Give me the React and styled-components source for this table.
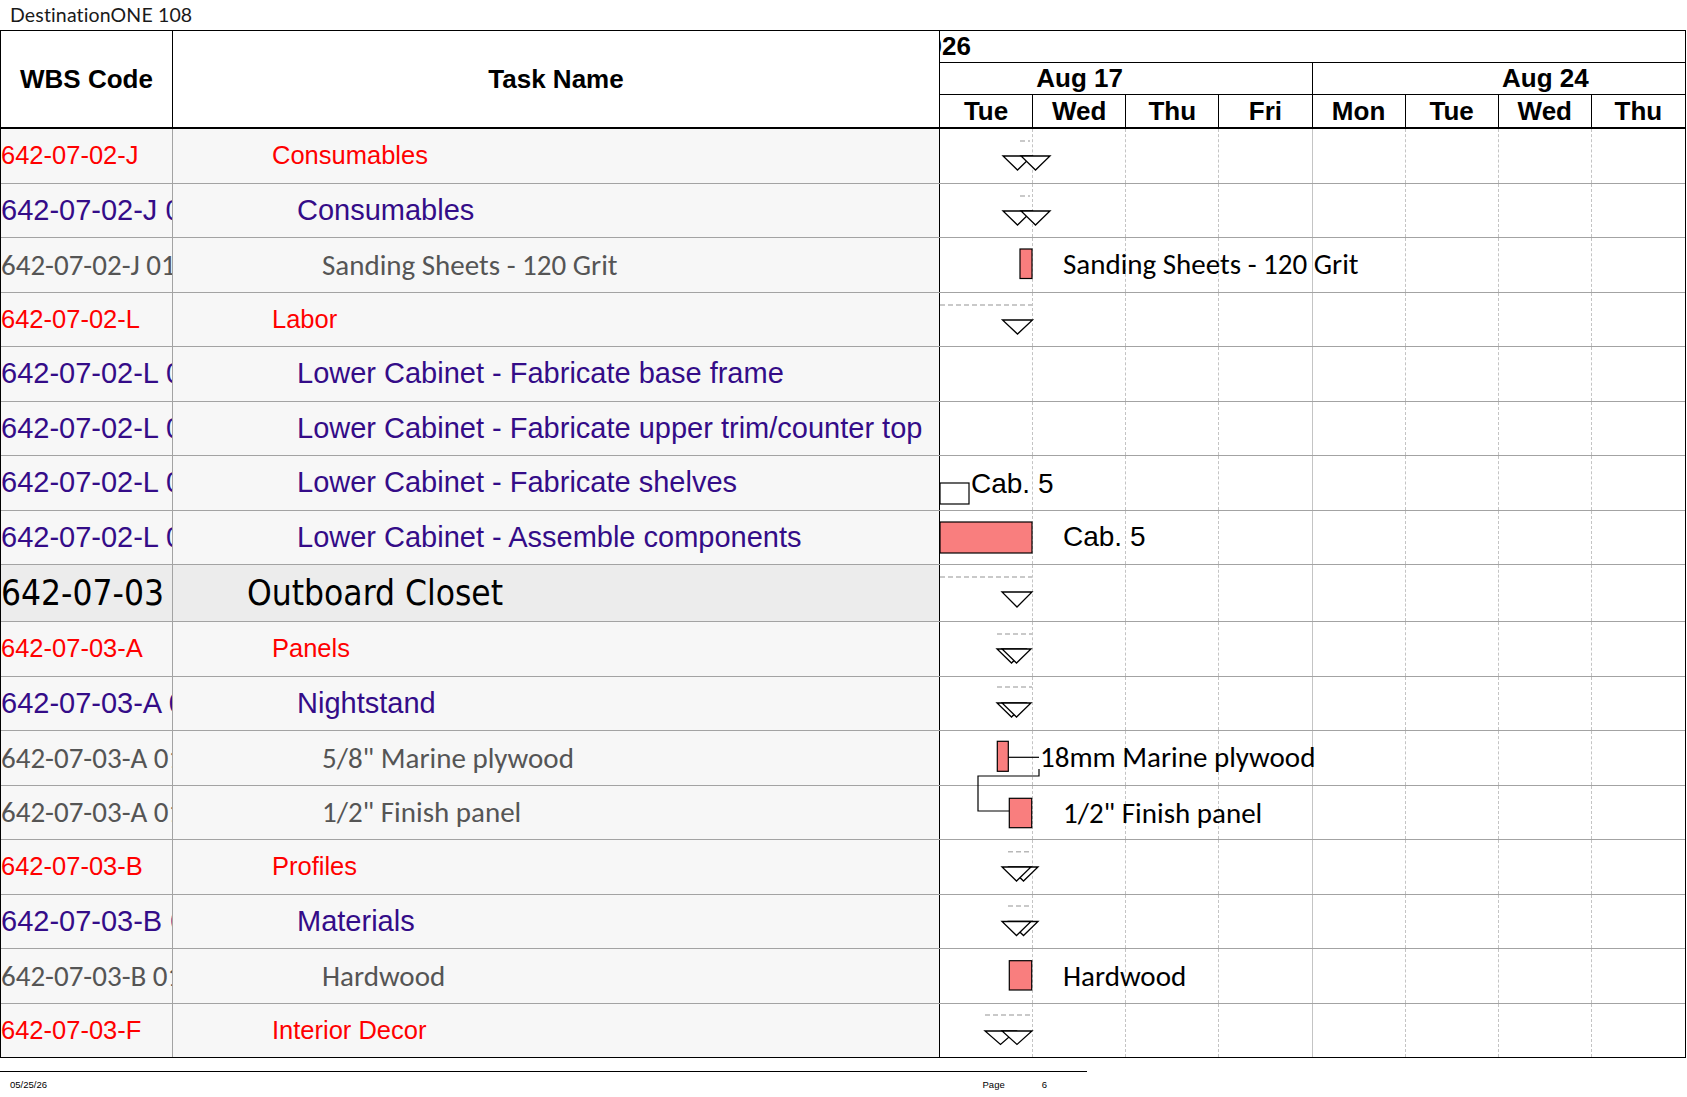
import React from 'react';
import styled, { createGlobalStyle } from 'styled-components';

const DAY_W = 745 / 8;
const ROW_H = 54.5;
const L1_H = 57;

const ARIAL = '"Liberation Sans", Arial, sans-serif';
const CALIBRI = 'Carlito, Lato, "Liberation Sans", sans-serif';
const TAHOMA = '"DejaVu Sans Condensed", "DejaVu Sans", sans-serif';

const Global = createGlobalStyle`
  html, body { margin: 0; padding: 0; background: #fff; }
  body { font-family: ${ARIAL}; }
  * { box-sizing: border-box; }
`;

const Page = styled.div`
  width: 1687px;
  height: 1097px;
  overflow: hidden;
  background: #fff;
`;

const Title = styled.div`
  height: 30px;
  line-height: 30px;
  padding-left: 10px;
  font-family: Lato, "Open Sans", sans-serif;
  font-size: 19.5px;
  letter-spacing: 0.15px;
  color: #1a1a1a;
`;

const Table = styled.div`
  width: 1686px;
  border: 1px solid #000;
  display: flex;
  flex-direction: column;
`;

const Grid = styled.div`
  display: grid;
  grid-template-columns: 172px 767px 745px;
`;

const HeaderRow = styled(Grid)`
  height: 98px;
  border-bottom: 2px solid #000;
`;

const HeadCell = styled.div`
  display: flex;
  align-items: center;
  justify-content: center;
  border-right: 1px solid #000;
  font-family: ${ARIAL};
  font-weight: 700;
  font-size: 26px;
  color: #000;
`;

const TimeHead = styled.div`
  display: flex;
  flex-direction: column;
`;

const Tier = styled.div`
  height: 32px;
  display: flex;
  overflow: hidden;
  border-bottom: ${(p) => (p.$last ? 'none' : '1px solid #000')};
  font-family: ${ARIAL};
  font-weight: 700;
  font-size: 26px;
  color: #000;
`;

const YearText = styled.div`
  line-height: 31px;
  white-space: nowrap;
  text-indent: -27px;
`;

const WeekCell = styled.div`
  width: ${DAY_W * 4}px;
  flex-shrink: 0;
  display: flex;
  overflow: hidden;
  border-right: ${(p) => (p.$last ? 'none' : '1px solid #000')};
`;

const WeekLabel = styled.div`
  width: ${DAY_W * 5}px;
  flex-shrink: 0;
  margin-left: ${(p) => p.$shift}px;
  text-align: center;
  line-height: 31px;
`;

const DayHead = styled.div`
  width: ${DAY_W}px;
  flex-shrink: 0;
  text-align: center;
  line-height: 32px;
  border-right: ${(p) => (p.$last ? 'none' : '1px solid #000')};
`;

const BodyRow = styled(Grid)`
  height: ${(p) => (p.$level === 1 ? L1_H : ROW_H)}px;
  border-bottom: 1px solid #a3a3a3;
  &:last-child { border-bottom: none; height: ${ROW_H - 1}px; }
`;

const levelFont = {
  1: { family: TAHOMA, size: 35, color: '#000' },
  2: { family: ARIAL, size: 25.5, color: '#ff0000' },
  3: { family: ARIAL, size: 29, color: '#340c88' },
  4: { family: CALIBRI, size: 29, color: '#555555' },
};

const TextCell = styled.div`
  display: flex;
  align-items: center;
  overflow: hidden;
  white-space: nowrap;
  background: ${(p) => (p.$level === 1 ? '#ececec' : '#f7f7f7')};
  font-family: ${(p) => levelFont[p.$level].family};
  font-size: ${(p) => levelFont[p.$level].size}px;
  color: ${(p) => levelFont[p.$level].color};
`;

const WbsCell = styled(TextCell)`
  border-right: 1px solid #a3a3a3;
  padding-left: 0;
`;

const TaskCell = styled(TextCell)`
  border-right: 1px solid #000;
  padding-left: ${(p) => 74 + (p.$level - 1) * 25}px;
`;

const TimeCell = styled.div`
  position: relative;
  display: flex;
  background: #fff;
`;

const DayCol = styled.div`
  width: ${DAY_W}px;
  flex-shrink: 0;
  border-right: ${(p) =>
    p.$last ? 'none' : p.$week ? '1px solid #c4c4c4' : '1px dashed #c4c4c4'};
`;

const Overlay = styled.svg`
  position: absolute;
  left: 0;
  top: 0;
  z-index: 2;
  overflow: visible;
  pointer-events: none;
`;

const BarLabel = styled.span`
  position: absolute;
  z-index: 2;
  transform: translateY(-50%);
  white-space: nowrap;
  color: #000;
  font-family: ${(p) => (p.$font === 'arial' ? ARIAL : CALIBRI)};
  font-size: ${(p) => (p.$font === 'arial' ? 28 : 29)}px;
  line-height: 1;
`;

const Footer = styled.div`
  width: 1087px;
  margin-top: 13px;
  border-top: 1px solid #000;
  display: flex;
  align-items: center;
  height: 26px;
  padding-left: 10px;
  padding-right: 40px;
  font-family: ${ARIAL};
  font-size: 9.5px;
  color: #000;
`;

const FootDate = styled.span`
  flex: 1;
`;

const FootPage = styled.span`
  margin-right: 37px;
`;

const tri = (x, y, w, h) => ({ t: 'tri', x, y, w, h });
const dash = (x1, x2, y) => ({ t: 'dash', x1, x2, y });
const bar = (x, y, w, h) => ({ t: 'bar', x, y, w, h });
const label = (x, y, text, font = 'calibri') => ({ t: 'label', x, y, text, font });

const rows = [
  { wbs: '642-07-02-J', name: 'Consumables', level: 2,
    g: [dash(80, 90, 12), tri(63, 27, 29, 14), tri(81, 27, 29, 14)] },
  { wbs: '642-07-02-J 01', name: 'Consumables', level: 3,
    g: [dash(80, 90, 12), tri(63, 27, 29, 14), tri(81, 27, 29, 14)] },
  { wbs: '642-07-02-J 01.01', name: 'Sanding Sheets - 120 Grit', level: 4,
    g: [bar(80, 11, 12, 29.5), label(123, 26, 'Sanding Sheets - 120 Grit')] },
  { wbs: '642-07-02-L', name: 'Labor', level: 2,
    g: [dash(0, 92, 12), tri(62.5, 27, 30, 14)] },
  { wbs: '642-07-02-L 01', name: 'Lower Cabinet - Fabricate base frame', level: 3, g: [] },
  { wbs: '642-07-02-L 02', name: 'Lower Cabinet - Fabricate upper trim/counter top', level: 3, g: [] },
  { wbs: '642-07-02-L 03', name: 'Lower Cabinet - Fabricate shelves', level: 3,
    g: [{ t: 'box', x: 0, y: 27, w: 29, h: 21 }, label(31, 28, 'Cab. 5', 'arial')] },
  { wbs: '642-07-02-L 04', name: 'Lower Cabinet - Assemble components', level: 3,
    g: [bar(0, 11, 92, 31), label(123, 26, 'Cab. 5', 'arial')] },
  { wbs: '642-07-03', name: 'Outboard Closet', level: 1,
    g: [dash(0, 92, 12), tri(62, 27, 30, 15)] },
  { wbs: '642-07-03-A', name: 'Panels', level: 2,
    g: [dash(57, 92, 12), tri(57, 27, 29, 14), tri(62, 27, 29, 14)] },
  { wbs: '642-07-03-A 01', name: 'Nightstand', level: 3,
    g: [dash(57, 92, 10), tri(57, 26, 29, 14), tri(62, 26, 29, 14)] },
  { wbs: '642-07-03-A 01.01', name: '5/8" Marine plywood', level: 4,
    g: [
      bar(57.3, 10.3, 11, 30),
      { t: 'line', d: 'M68.3,26.3 H99' },
      label(100, 26, '18mm Marine plywood'),
      { t: 'line', d: 'M99,38 V45 H38 V80 H69.3' },
    ] },
  { wbs: '642-07-03-A 01.02', name: '1/2" Finish panel', level: 4,
    g: [bar(69.3, 12.3, 22.4, 29.4), label(123, 27, '1/2" Finish panel')] },
  { wbs: '642-07-03-B', name: 'Profiles', level: 2,
    g: [dash(68, 92, 11.7), tri(69, 27, 29, 14), tri(62, 27, 29, 14)] },
  { wbs: '642-07-03-B 01', name: 'Materials', level: 3,
    g: [dash(68, 92, 11), tri(69, 26.5, 29, 14), tri(62, 26.5, 29, 14)] },
  { wbs: '642-07-03-B 01.01', name: 'Hardwood', level: 4,
    g: [bar(69.3, 11.7, 22.4, 29.3), label(123, 27, 'Hardwood')] },
  { wbs: '642-07-03-F', name: 'Interior Decor', level: 2,
    g: [dash(45, 92, 11), tri(45, 27, 31, 13.5), tri(62, 27, 30, 13.5)] },
];

const days = ['Tue', 'Wed', 'Thu', 'Fri', 'Mon', 'Tue', 'Wed', 'Thu'];

function Shape({ s }) {
  switch (s.t) {
    case 'tri':
      return (
        <polygon
          points={`${s.x},${s.y} ${s.x + s.w},${s.y} ${s.x + s.w / 2},${s.y + s.h}`}
          fill="#fff"
          stroke="#000"
          strokeWidth="1.3"
          strokeLinejoin="miter"
        />
      );
    case 'dash':
      return (
        <line x1={s.x1} x2={s.x2} y1={s.y} y2={s.y} stroke="#b8b8b8" strokeWidth="1.5" strokeDasharray="5 3" />
      );
    case 'bar':
      return <rect x={s.x} y={s.y} width={s.w} height={s.h} fill="#f97e7e" stroke="#000" strokeWidth="1.2" />;
    case 'box':
      return <rect x={s.x} y={s.y} width={s.w} height={s.h} fill="#fff" stroke="#000" strokeWidth="1.2" />;
    case 'line':
      return <path d={s.d} fill="none" stroke="#000" strokeWidth="1.2" />;
    default:
      return null;
  }
}

function GanttCell({ items, height }) {
  const shapes = items.filter((i) => i.t !== 'label');
  const labels = items.filter((i) => i.t === 'label');
  return (
    <TimeCell>
      {days.map((d, i) => (
        <DayCol key={i} $week={i === 3} $last={i === 7} />
      ))}
      {shapes.length > 0 && (
        <Overlay width="745" height={height}>
          {shapes.map((s, i) => (
            <Shape key={i} s={s} />
          ))}
        </Overlay>
      )}
      {labels.map((l, i) => (
        <BarLabel key={i} $font={l.font} style={{ left: l.x, top: l.y }}>
          {l.text}
        </BarLabel>
      ))}
    </TimeCell>
  );
}

export default function App() {
  return (
    <Page>
      <Global />
      <Title>DestinationONE 108</Title>
      <Table>
        <HeaderRow>
          <HeadCell>WBS Code</HeadCell>
          <HeadCell>Task Name</HeadCell>
          <TimeHead>
            <Tier>
              <YearText>2026</YearText>
            </Tier>
            <Tier>
              <WeekCell>
                <WeekLabel $shift={-DAY_W}>Aug 17</WeekLabel>
              </WeekCell>
              <WeekCell $last>
                <WeekLabel $shift={0}>Aug 24</WeekLabel>
              </WeekCell>
            </Tier>
            <Tier $last>
              {days.map((d, i) => (
                <DayHead key={i} $last={i === 7}>
                  {d}
                </DayHead>
              ))}
            </Tier>
          </TimeHead>
        </HeaderRow>
        {rows.map((r, i) => (
          <BodyRow key={i} $level={r.level}>
            <WbsCell $level={r.level}>{r.wbs}</WbsCell>
            <TaskCell $level={r.level}>{r.name}</TaskCell>
            <GanttCell items={r.g} height={r.level === 1 ? L1_H : ROW_H} />
          </BodyRow>
        ))}
      </Table>
      <Footer>
        <FootDate>05/25/26</FootDate>
        <FootPage>Page</FootPage>
        <span>6</span>
      </Footer>
    </Page>
  );
}
